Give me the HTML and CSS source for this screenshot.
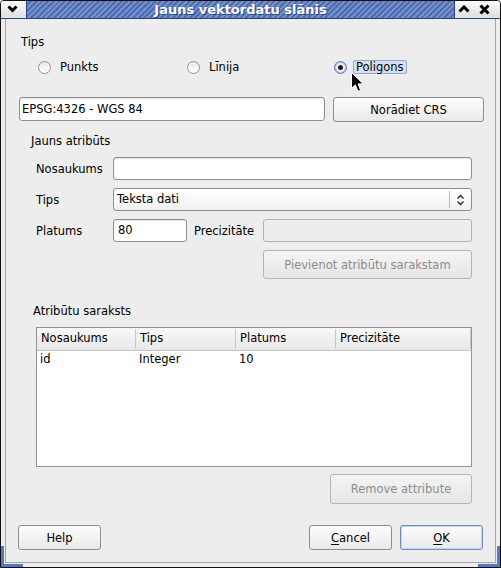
FILE: index.html
```html
<!DOCTYPE html>
<html lang="lv">
<head>
    <meta charset="UTF-8">
    <title>Jauns vektordatu slānis</title>
    <link rel="stylesheet" href="styles.css">
</head>
<body>

    <div class="window">
        <div class="titlebar">
            <div class="tb-menu">
                <svg width="11" height="8" viewBox="0 0 11 8"><path d="M1.5 1.5 L5.5 5.5 L9.5 1.5" fill="none" stroke="#000" stroke-width="3"/></svg>
            </div>
            <div class="tb-title">Jauns vektordatu slānis</div>
            <div class="tb-buttons">
                <svg width="12" height="8" viewBox="0 0 12 8"><path d="M1.5 6.5 L6 2 L10.5 6.5" fill="none" stroke="#000" stroke-width="3"/></svg>
                <svg width="11" height="11" viewBox="0 0 11 11"><path d="M1.5 1.5 L9.5 9.5 M9.5 1.5 L1.5 9.5" fill="none" stroke="#000" stroke-width="3"/></svg>
            </div>
        </div>

        <div class="frame">
            <div class="dialog">
                <div class="caption">Tips</div>
                <div class="radio-row">
                    <label class="radio"><span class="dot"></span>Punkts</label>
                    <label class="radio"><span class="dot"></span>Līnija</label>
                    <label class="radio checked"><span class="dot"></span><span class="focus">Poligons</span></label>
                </div>

                <div class="crs-row">
                    <div class="field crs">EPSG:4326 - WGS 84</div>
                    <button class="btn crs-btn">Norādiet CRS</button>
                </div>

                <div class="caption group">Jauns atribūts</div>
                <div class="form">
                    <div class="label">Nosaukums</div>
                    <div class="field wide"></div>

                    <div class="label">Tips</div>
                    <div class="field select wide">
                        <span>Teksta dati</span>
                        <span class="arrows">
                            <svg width="9" height="12" viewBox="0 0 9 12"><path d="M1.5 4.5 L4.5 1.5 L7.5 4.5 M1.5 7.5 L4.5 10.5 L7.5 7.5" fill="none" stroke="#222" stroke-width="1.3"/></svg>
                        </span>
                    </div>

                    <div class="label">Platums</div>
                    <div class="field">80</div>
                    <div class="label precision">Precizitāte</div>
                    <div class="field disabled"></div>

                    <button class="btn disabled add-btn">Pievienot atribūtu sarakstam</button>
                </div>

                <div class="caption list">Atribūtu saraksts</div>
                <div class="table">
                    <div class="thead">
                        <div>Nosaukums</div>
                        <div>Tips</div>
                        <div>Platums</div>
                        <div>Precizitāte</div>
                    </div>
                    <div class="trow">
                        <div>id</div>
                        <div>Integer</div>
                        <div>10</div>
                        <div></div>
                    </div>
                </div>

                <div class="remove-row">
                    <button class="btn disabled remove-btn">Remove attribute</button>
                </div>

                <div class="bottom-row">
                    <button class="btn">Help</button>
                    <span class="spacer"></span>
                    <button class="btn"><u>C</u>ancel</button>
                    <button class="btn default"><u>O</u>K</button>
                </div>
            </div>
        </div>

        <!-- resize grips -->
        <div class="grip grip-left"></div>
        <div class="grip grip-right"></div>

        <svg class="cursor" width="14" height="21" viewBox="0 0 14 21">
            <path d="M0.5 0.5 L0.5 16.5 L4.3 12.8 L7 19.3 L9.6 18.2 L7 11.9 L12.2 11.9 Z" fill="#000" stroke="#fff" stroke-width="1"/>
        </svg>
    </div>

</body>
</html>
```

FILE: styles.css
```css
* {
    box-sizing: border-box;
}

body {
    margin: 0;
    background: #ededed;
    font-family: 'DejaVu Sans', sans-serif;
    font-size: 11.5px;
    color: #000;
}

.window {
    position: relative;
    width: 501px;
    height: 568px;
    background: #ededed;
    border: 1px solid #111;
    border-radius: 4px 4px 0 0;
    display: flex;
    flex-direction: column;
    overflow: hidden;
}

/* title bar */
.titlebar {
    display: flex;
    height: 18px;
    border-bottom: 1px solid #25407a;
}

.tb-menu {
    width: 25px;
    display: flex;
    align-items: center;
    justify-content: center;
    padding-right: 2px;
    background: linear-gradient(#fbfbfb, #dedede);
    border-bottom: 1px solid #ededed;
}

.tb-title {
    flex: 1;
    text-align: center;
    font-weight: bold;
    font-size: 13px;
    line-height: 17px;
    color: #fff;
    text-shadow: 1px 1px 0 #2c4580;
    border-left: 1px solid #2c4580;
    border-right: 1px solid #2c4580;
    background: repeating-linear-gradient(135deg, #7590cb 0px, #7590cb 2px, #4d6cb2 2px, #4d6cb2 4px);
}

.tb-buttons {
    width: 45px;
    display: flex;
    align-items: center;
    gap: 9px;
    padding-left: 3px;
    background: linear-gradient(#fbfbfb, #dedede);
    border-bottom: 1px solid #ededed;
}

.frame {
    flex: 1;
    padding: 0 4px 4px 4px;
    display: flex;
}

.dialog {
    flex: 1;
    border: 1px solid #a4a4a4;
    border-top: none;
    padding: 16px 10px 0 13px;
}

.caption {
    line-height: 15px;
    height: 15px;
    padding-left: 2px;
}

/* radio buttons */
.radio-row {
    margin-top: 9px;
    height: 16px;
    padding-left: 19px;
    display: grid;
    grid-template-columns: 149px 147px auto;
    align-items: center;
}

.radio {
    display: flex;
    align-items: center;
    gap: 9px;
    line-height: 14px;
}

.dot {
    width: 13px;
    height: 13px;
    border-radius: 50%;
    border: 1px solid #929292;
    background: linear-gradient(#e8e8e8, #ffffff);
    position: relative;
}

.radio.checked .dot {
    border-color: #5b7bb8;
    box-shadow: inset 0 0 0 1px #a9bde0;
    background: #f4f4f4;
}

.radio.checked .dot::after {
    content: '';
    position: absolute;
    left: 3px;
    top: 3px;
    width: 5px;
    height: 5px;
    border-radius: 50%;
    background: #1c1c1c;
}

.focus {
    margin-left: -3px;
    padding: 0 2px 0 2px;
    background: #d8e0ef;
    border: 1px solid #8ea5cf;
    border-radius: 2px;
    line-height: 12px;
}

/* inputs and buttons */
.field {
    height: 23px;
    background: #fff;
    border: 1px solid #8e8e8e;
    border-radius: 3px;
    box-shadow: inset 0 1px 1px rgba(0, 0, 0, 0.12);
    padding: 0 4px;
    line-height: 21px;
    white-space: nowrap;
}

.field.disabled {
    background: #ededed;
    border-color: #b0b0b0;
    box-shadow: none;
}

.btn {
    font-family: inherit;
    font-size: 11.5px;
    color: #000;
    background: linear-gradient(#fdfdfd, #e9e9e9);
    border: 1px solid #8e8e8e;
    border-radius: 3px;
    padding: 0;
    height: 25px;
}

.btn.disabled {
    color: #8c8c8c;
    border-color: #b4b4b4;
    background: linear-gradient(#f4f4f4, #e6e6e6);
}

.btn.default {
    border-color: #6e8dc4;
    box-shadow: inset 0 0 0 1px #c4d2ec;
}

.btn u {
    text-underline-offset: 2px;
}

.crs-row {
    margin-top: 22px;
    display: flex;
    gap: 8px;
    align-items: flex-start;
}

.field.crs {
    width: 306px;
    height: 24px;
    line-height: 22px;
    padding-left: 2px;
}

.crs-btn {
    width: 151px;
}

.caption.group {
    margin-top: 12px;
    padding-left: 12px;
}

/* new attribute form */
.form {
    margin: 8px 13px 0 17px;
    display: grid;
    grid-template-columns: 77px 74px 76px 1fr;
    grid-template-rows: 23px 23px 23px 29px;
    row-gap: 8px;
    align-items: center;
}

.form .wide {
    grid-column: 2 / 5;
}

.label.precision {
    padding-left: 7px;
}

.select {
    display: flex;
    align-items: center;
    padding-left: 3px;
    background: linear-gradient(#ffffff, #f0f0f0);
    box-shadow: none;
}

.select span:first-child {
    flex: 1;
}

.arrows {
    height: 17px;
    border-left: 1px solid #b8b8b8;
    display: flex;
    align-items: center;
    padding: 0 2px 0 6px;
}

.add-btn {
    grid-column: 4;
    height: 29px;
}

.caption.list {
    margin-top: 25px;
    padding-left: 14px;
}

/* attribute list */
.table {
    margin: 8px 13px 0 17px;
    height: 140px;
    background: #fff;
    border: 1px solid #939393;
}

.thead,
.trow {
    display: grid;
    grid-template-columns: 99px 100px 100px 1fr;
}

.thead {
    height: 23px;
    background: linear-gradient(#f7f7f7, #e8e8e8);
    border-bottom: 1px solid #c2c2c2;
}

.thead div {
    padding-left: 4px;
    border-right: 1px solid #c8c8c8;
    margin: 1px 0;
    line-height: 19px;
}

.trow {
    height: 17px;
    line-height: 17px;
}

.trow div {
    padding-left: 3px;
}

.remove-row {
    margin: 7px 13px 0 0;
    display: flex;
    justify-content: flex-end;
}

.remove-btn {
    width: 142px;
    height: 30px;
}

.bottom-row {
    margin: 21px 2px 0 -1px;
    display: flex;
    gap: 8px;
}

.bottom-row .btn {
    width: 83px;
}

.spacer {
    flex: 1;
}

.grip {
    position: absolute;
    bottom: -1px;
    width: 23px;
    height: 22px;
    border-bottom: 4px solid #5676bd;
}

.grip-left {
    left: -1px;
    border-left: 4px solid #5676bd;
}

.grip-right {
    right: -1px;
    border-right: 4px solid #5676bd;
}

.cursor {
    position: absolute;
    left: 350px;
    top: 71px;
}
```
